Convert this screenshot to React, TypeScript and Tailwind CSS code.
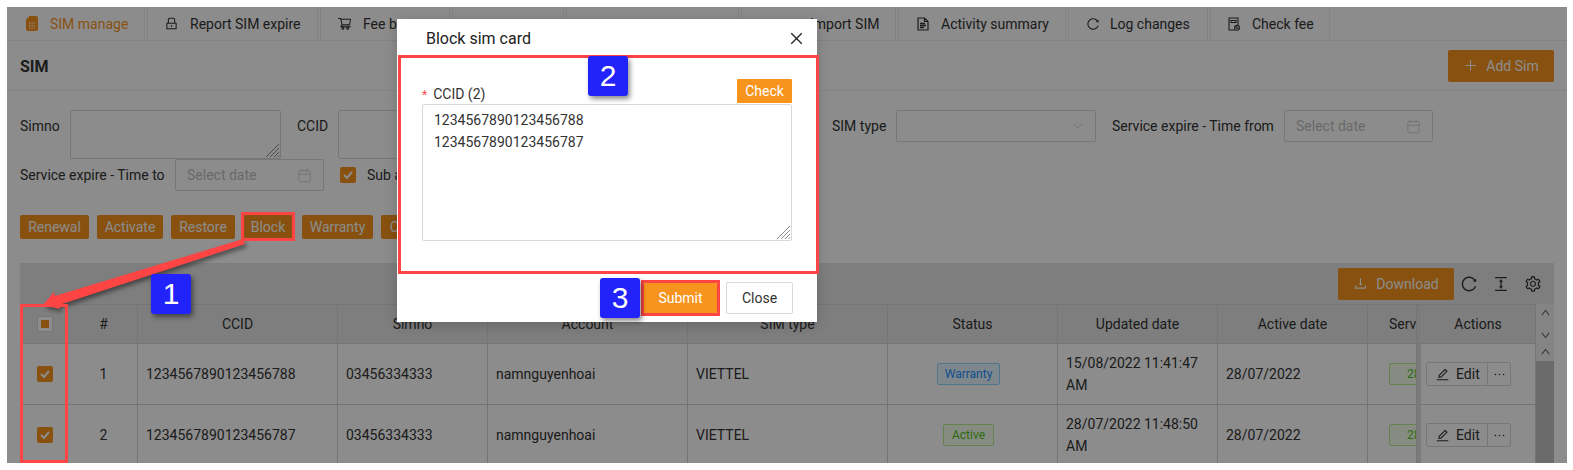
import React from 'react';
import { Calendar, ChevronDown } from 'lucide-react';
import {
  AiOutlineClose,
  AiOutlineColumnHeight,
  AiOutlineDown,
  AiOutlineDownload,
  AiOutlineEdit,
  AiOutlineEllipsis,
  AiOutlineLock,
  AiOutlinePlus,
  AiOutlineReload,
  AiOutlineSetting,
  AiOutlineShoppingCart,
  AiOutlineUp,
} from 'react-icons/ai';

const SimIcon = () => (
  <svg width="12" height="15" viewBox="0 0 12 15" className="text-[#f7941d]">
    <path d="M3.5 0H10a2 2 0 0 1 2 2v11a2 2 0 0 1-2 2H2a2 2 0 0 1-2-2V3.5z" fill="currentColor" />
    <path d="M3 7h6M3 9.5h6M3 12h6" stroke="#fff" strokeWidth="1" strokeDasharray="1.5 1" />
  </svg>
);

const DocIcon = () => (
  <svg width="12" height="14" viewBox="0 0 12 14" fill="none" stroke="#333" strokeWidth="1.2">
    <path d="M1 1h6.5L11 4.5V13H1z" />
    <path d="M7.5 1v3.5H11" />
    <path d="M3 6.5h5M3 8.5h6M3 10.5h4" strokeWidth="1.4" />
  </svg>
);

const FeeIcon = () => (
  <svg width="12" height="14" viewBox="0 0 12 14" fill="none" stroke="#333" strokeWidth="1.1">
    <path d="M7 13H1V1h9v7" />
    <path d="M3 3.5h5v2H3z" />
    <circle cx="9" cy="10.8" r="2.4" />
    <path d="M7.5 9.5l3 2.6" />
  </svg>
);

const tabs = [
  { label: 'SIM manage', icon: <SimIcon />, width: 'w-[138px]', pad: 'pl-[19px]', gap: 'gap-[12px]', active: true },
  { label: 'Report SIM expire', icon: <AiOutlineLock size={15} />, width: 'w-[171px]', pad: 'pl-[16px]', gap: 'gap-[11px]' },
  { label: 'Fee by', icon: <AiOutlineShoppingCart size={15} />, width: 'w-[130px]', pad: 'pl-[16px]', gap: 'gap-[11px]' },
  { label: '', width: 'w-[112px]', pad: '', gap: '' },
  { label: '', width: 'w-[173px]', pad: '', gap: '' },
  { label: 'Import SIM', width: 'w-[155px]', pad: 'pl-[68px]', gap: '' },
  { label: 'Activity summary', icon: <DocIcon />, width: 'w-[168px]', pad: 'pl-[18px]', gap: 'gap-[12px]' },
  { label: 'Log changes', icon: <AiOutlineReload size={14} />, width: 'w-[140px]', pad: 'pl-[17px]', gap: 'gap-[10px]' },
  { label: 'Check fee', icon: <FeeIcon />, width: 'w-[120px]', pad: 'pl-[17px]', gap: 'gap-[12px]' },
];

const actions = [
  { label: 'Renewal', width: 'w-[69px]' },
  { label: 'Activate', width: 'w-[66px]' },
  { label: 'Restore', width: 'w-[64px]' },
  { label: 'Block', width: 'w-[50px]' },
  { label: 'Warranty', width: 'w-[71px] ml-px' },
  { label: 'Cancel', width: 'w-[60px]' },
];

const rows = [
  { no: 1, ccid: '1234567890123456788', updated: '15/08/2022 11:41:47 AM', status: 'Warranty' },
  { no: 2, ccid: '1234567890123456787', updated: '28/07/2022 11:48:50 AM', status: 'Active' },
];

const cols = 'grid grid-cols-[50px_68px_200px_150px_200px_200px_170px_160px_150px_49px_119px]';
const cell = 'flex items-center border-r border-b border-[#d6d6d6] min-w-0';
const head = `${cell} justify-center`;
const body = `${cell} pl-2`;

const Hatch = () => (
  <svg className="absolute right-[1px] bottom-[1px]" width="15" height="15" viewBox="0 0 15 15" fill="none" stroke="#8a8a8a" strokeWidth="1">
    <path d="M1 14L14 1M5 14L14 5M9 14l5-5M12.5 14l1.5-1.5" />
  </svg>
);

const DatePicker = ({ width }: { width: string }) => (
  <div className={`${width} h-8 flex items-center justify-between border border-[#d9d9d9] rounded-[2px] pl-[11px] pr-[11px] text-[#bfbfbf]`}>
    <span>Select date</span>
    <Calendar size={15} strokeWidth={1} />
  </div>
);

const Check = () => (
  <span className="w-4 h-4 flex items-center justify-center bg-[#f7941d] rounded-[2px]">
    <svg width="10" height="8" viewBox="0 0 10 8" fill="none" stroke="#fff" strokeWidth="2">
      <path d="M1 4l3 3 5-6" />
    </svg>
  </span>
);

const NumberBadge = ({ n, className }: { n: number; className: string }) => (
  <div className={`absolute w-10 h-10 flex items-center justify-center rounded-[3px] bg-[#2222fb] text-white text-[30px] font-['Liberation_Sans',sans-serif] shadow-[2px_3px_5px_rgba(0,0,0,0.45)] ${className}`}>
    {n}
  </div>
);

export default function App() {
  return (
    <div className="w-[1573px] h-[470px] bg-white pl-[7px] pt-[7px] overflow-hidden font-['Roboto',sans-serif] text-sm text-[#333]">
      <div className="relative w-[1560px] h-[456px] bg-white overflow-hidden">
        <div className="flex gap-[2px] h-[34px] border-b border-[#eeeeee]">
          {tabs.map((t, i) => (
            <div
              key={i}
              className={`${t.width} ${t.pad} ${t.gap} flex items-center shrink-0 border-r border-[#eeeeee] ${t.active ? 'text-[#f7941d]' : 'border-l'}`}
            >
              {t.icon}
              <span>{t.label}</span>
            </div>
          ))}
        </div>

        <div className="flex items-center justify-between h-[50px] pl-[13px] pr-[13px] border-b border-[#eeeeee]">
          <h2 className="text-base font-bold pt-[2px]">SIM</h2>
          <button className="w-[106px] h-8 flex items-center justify-center gap-2 bg-[#f7941d] text-white rounded-[2px]">
            <AiOutlinePlus size={15} />
            Add Sim
          </button>
        </div>

        <div className="px-[13px] pt-[19px]">
          <div className="flex items-start h-[49px]">
            <label className="w-[50px] leading-8">Simno</label>
            <div className="relative w-[211px] h-[49px]">
              <textarea readOnly className="block w-full h-full border border-[#d9d9d9] rounded-[2px] resize-none" />
              <Hatch />
            </div>
            <label className="w-[41px] ml-4 leading-8">CCID</label>
            <textarea readOnly className="w-[211px] h-[49px] border border-[#d9d9d9] rounded-[2px] resize-none" />
            <div className="w-[283px]" />
            <label className="w-[64px] leading-8">SIM type</label>
            <div className="w-[200px] h-8 flex items-center justify-end border border-[#d9d9d9] rounded-[2px] pr-[9px] text-[#bfbfbf]">
              <ChevronDown size={16} strokeWidth={1} />
            </div>
            <label className="w-[172px] ml-4 leading-8">Service expire - Time from</label>
            <DatePicker width="w-[149px]" />
          </div>
          <div className="flex items-center h-8">
            <label className="w-[155px]">Service expire - Time to</label>
            <DatePicker width="w-[149px]" />
            <span className="ml-4 mr-[11px]"><Check /></span>
            <span>Sub account</span>
          </div>

          <div className="flex gap-2 mt-6 h-6">
            {actions.map((a) => (
              <button key={a.label} className={`h-6 ${a.width} bg-[#f7941d] text-white rounded-[2px]`}>
                {a.label}
              </button>
            ))}
          </div>

          <div className="flex items-center justify-end h-[41px] mt-6 bg-[#e6e6e6] pr-[12px]">
            <button className="w-[116px] h-8 flex items-center justify-center gap-2 bg-[#f7941d] text-white rounded-[2px] mr-[5px]">
              <AiOutlineDownload size={15} />
              Download
            </button>
            <AiOutlineReload size={18} className="ml-[1px]" />
            <AiOutlineColumnHeight size={18} className="ml-[14px]" />
            <AiOutlineSetting size={18} className="ml-[14px]" />
          </div>

          <div className="flex">
            <div className="w-[1516px] shrink-0 border-t border-[#d6d6d6]">
              <div className={`${cols} h-[39px] bg-[#e6e6e6]`}>
                <div className={`${head} border-r-0`}>
                  <span className="w-4 h-4 flex items-center justify-center border border-[#d9d9d9] bg-white rounded-[2px]">
                    <span className="w-2 h-2 bg-[#f7941d]" />
                  </span>
                </div>
                <div className={head}>#</div>
                <div className={head}>CCID</div>
                <div className={head}>Simno</div>
                <div className={head}>Account</div>
                <div className={head}>SIM type</div>
                <div className={head}>Status</div>
                <div className={head}>Updated date</div>
                <div className={head}>Active date</div>
                <div className={`${cell} pl-[21px] overflow-hidden whitespace-nowrap`}>Service expire</div>
                <div className={`${head} border-l-[4px] border-l-[#e0e0e0]`}>Actions</div>
              </div>
              {rows.map((r) => (
                <div key={r.no} className={`${cols} h-[61px]`}>
                  <div className={`${head} border-r-0`}><Check /></div>
                  <div className={head}>{r.no}</div>
                  <div className={body}>{r.ccid}</div>
                  <div className={body}>03456334333</div>
                  <div className={body}>namnguyenhoai</div>
                  <div className={body}>VIETTEL</div>
                  <div className={`${head} pr-2`}>
                    {r.status === 'Warranty' ? (
                      <span className="h-[22px] px-[7px] leading-5 text-xs text-[#1890ff] bg-[#e6f7ff] border border-[#91d5ff] rounded-[2px]">Warranty</span>
                    ) : (
                      <span className="h-[22px] px-[8px] leading-5 text-xs text-[#52c41a] bg-[#f6ffed] border border-[#b7eb8f] rounded-[2px]">Active</span>
                    )}
                  </div>
                  <div className={`${body} leading-[22px] pr-2`}>{r.updated}</div>
                  <div className={body}>28/07/2022</div>
                  <div className={`${cell} pl-[21px] overflow-hidden`}>
                    <span className="h-[22px] shrink-0 pl-[17px] pr-2 leading-5 text-xs text-[#52c41a] bg-[#f6ffed] border border-[#b7eb8f] rounded-[2px]">28/07/2022</span>
                  </div>
                  <div className={`${cell} pl-[5px] border-l-[4px] border-l-[#e0e0e0]`}>
                    <div className="flex h-6 w-[85px] border border-[#d9d9d9] rounded-[2px]">
                      <div className="w-[61px] flex items-center gap-[6px] pl-2 border-r border-[#d9d9d9]">
                        <AiOutlineEdit size={15} />
                        Edit
                      </div>
                      <div className="flex-1 flex items-center justify-center">
                        <AiOutlineEllipsis size={15} />
                      </div>
                    </div>
                  </div>
                </div>
              ))}
            </div>
            <div className="w-[18px] shrink-0 flex flex-col">
              <div className="h-[57px] bg-[#f1f1f1] flex flex-col items-center pt-[3px] text-[#505050]">
                <AiOutlineUp size={11} />
                <AiOutlineDown size={11} className="mt-[12px]" />
                <AiOutlineUp size={11} className="mt-[5px]" />
              </div>
              <div className="flex-1 bg-[#c4c4c4]" />
            </div>
          </div>
        </div>

        <div className="absolute inset-0 bg-black/45" />

        <div className="absolute left-[390px] top-[12px] w-[420px] h-[303px] bg-white shadow-[0_3px_12px_rgba(0,0,0,0.18)]">
          <div className="flex items-center justify-between h-[38px] pl-[29px] pr-[12px] text-base text-[#222]">
            <span className="pt-[2px]">Block sim card</span>
            <AiOutlineClose size={17} />
          </div>
          <div className="px-[25px] pt-[22px]">
            <div className="flex items-end justify-between h-[25px]">
              <label className="flex items-center gap-[6px] leading-5 text-[#333]">
                <span className="text-[#ff4d4f] text-xs mt-[2px]">*</span>
                CCID (2)
              </label>
              <button className="w-[55px] h-6 mb-px bg-[#f7941d] text-white rounded-[1px]">Check</button>
            </div>
            <div className="relative w-[370px] h-[137px]">
              <textarea
                readOnly
                defaultValue={'1234567890123456788\n1234567890123456787'}
                className="block w-full h-full border border-[#d9d9d9] rounded-[2px] pl-[11px] pt-1 leading-[22px] text-[#333] resize-none outline-none"
              />
              <Hatch />
            </div>
          </div>
          <div className="absolute right-[24px] bottom-[8px] flex items-center gap-[9px]">
            <button className="w-[73px] h-[30px] bg-[#f7941d] text-white rounded-[1px]">Submit</button>
            <button className="w-[67px] h-[32px] border border-[#d9d9d9] rounded-[2px] text-[#333]">Close</button>
          </div>
        </div>

        <svg className="absolute left-0 top-0 drop-shadow-[2px_3px_2px_rgba(0,0,0,0.45)]" width="1560" height="456" fill="none">
          <path d="M236 232L48 289l-1-4-11 13 17 4-1-4L238 237z" fill="#ff4444" />
        </svg>
        <div className="absolute left-[234px] top-[205px] w-[54px] h-[29px] border-[3px] border-[#ff4444]" />
        <div className="absolute left-[13px] top-[297px] w-[48px] h-[159px] border-[3px] border-[#ff4444]" />
        <div className="absolute left-[391px] top-[48px] w-[421px] h-[219px] border-[3px] border-[#ff4444]" />
        <div className="absolute left-[634px] top-[273px] w-[79px] h-[36px] border-[3px] border-[#ff4444]" />

        <NumberBadge n={1} className="left-[144px] top-[267px]" />
        <NumberBadge n={2} className="left-[581px] top-[49px]" />
        <NumberBadge n={3} className="left-[593px] top-[271px]" />
      </div>
    </div>
  );
}
